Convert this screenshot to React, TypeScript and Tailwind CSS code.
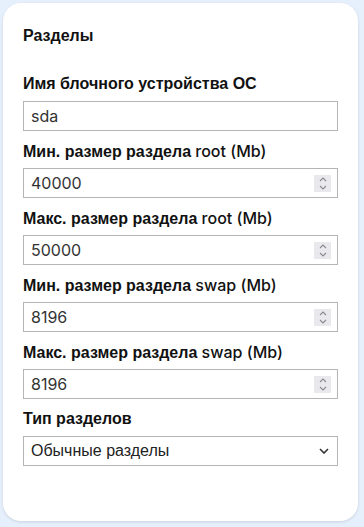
import React from "react";

const latin = "font-['Inter',sans-serif]";

const Spinner = () => (
  <div className="w-[17px] h-[17px] bg-[#e9e9ed] flex flex-col items-center justify-center gap-[3px]">
    <svg width="8" height="5" viewBox="0 0 8 5">
      <path d="M1 4 L4 1 L7 4" fill="none" stroke="#8a8a8f" strokeWidth="1.1" />
    </svg>
    <svg width="8" height="5" viewBox="0 0 8 5">
      <path d="M1 1 L4 4 L7 1" fill="none" stroke="#8a8a8f" strokeWidth="1.1" />
    </svg>
  </div>
);

const Label = ({ cyr, lat }: { cyr: string; lat?: string }) => (
  <div className="h-[22px] text-[16px] leading-[22px] font-bold text-[#111] mb-[6px]">
    {cyr}
    {lat && <span className={`${latin} font-medium`}> {lat}</span>}
  </div>
);

const NumberField = ({ label, lat, value }: { label: string; lat: string; value: string }) => (
  <div className="mb-[9px]">
    <Label cyr={label} lat={lat} />
    <div className="h-[30px] border border-[#b5b5b5] flex items-center justify-between pl-[7px] pr-[6px]">
      <span className={`${latin} text-[16px] text-[#333]`}>{value}</span>
      <Spinner />
    </div>
  </div>
);

export default function App() {
  return (
    <div className="w-[364px] h-[527px] bg-[#e6effc] p-[3px] font-['Liberation_Sans',Arial,sans-serif]">
      <div className="h-[518px] w-[355px] bg-white rounded-[18px] shadow-[0_1px_3px_rgba(0,0,0,0.12)] px-[20px] pt-[22px]">
        <div className="h-[22px] text-[16px] leading-[22px] font-bold text-[#111] mb-[26px]">Разделы</div>

        <div className="mb-[9px]">
          <Label cyr="Имя блочного устройства ОС" />
          <div className="h-[30px] border border-[#b5b5b5] flex items-center pl-[7px]">
            <span className={`${latin} text-[16px] text-[#333]`}>sda</span>
          </div>
        </div>

        <NumberField label="Мин. размер раздела" lat="root (Mb)" value="40000" />
        <NumberField label="Макс. размер раздела" lat="root (Mb)" value="50000" />
        <NumberField label="Мин. размер раздела" lat="swap (Mb)" value="8196" />
        <NumberField label="Макс. размер раздела" lat="swap (Mb)" value="8196" />

        <div>
          <Label cyr="Тип разделов" />
          <div className="h-[30px] border border-[#b5b5b5] flex items-center justify-between pl-[7px] pr-[8px]">
            <span className="text-[16px] text-[#222]">Обычные разделы</span>
            <svg width="10" height="6" viewBox="0 0 10 6">
              <path d="M1 1 L5 5 L9 1" fill="none" stroke="#333" strokeWidth="1.6" />
            </svg>
          </div>
        </div>
      </div>
    </div>
  );
}
